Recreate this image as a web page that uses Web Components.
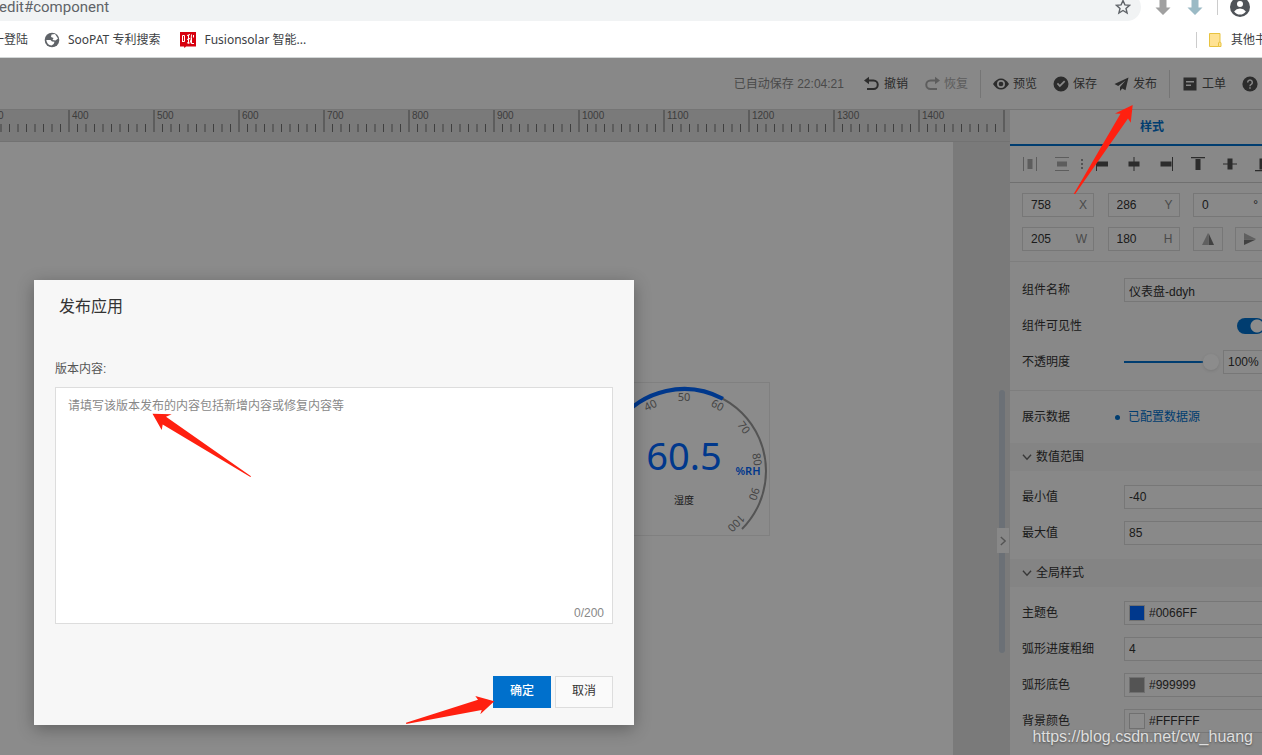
<!DOCTYPE html>
<html lang="zh-CN">
<head>
<meta charset="utf-8">
<title>发布应用</title>
<style>
html, body { margin: 0; height: 100%; }
body { font: 12px/16px "Liberation Sans", "Noto Sans CJK SC", sans-serif; color: #333; overflow: hidden; }
</style>
</head>
<body>
<editor-window></editor-window>
<script>
const define = (name, html, setup) => customElements.define(name, class extends HTMLElement {
  constructor() {
    super();
    const root = this.attachShadow({ mode: 'open' });
    root.innerHTML = '<style>*{box-sizing:border-box}button,input,textarea{font:inherit;color:inherit;margin:0}</style>' + html;
    if (setup) this.setup = setup;
  }
  connectedCallback() { if (this.setup && !this.ready) { this.ready = true; this.setup(this.shadowRoot); } }
});

const ICONS = {
  undo: '<path d="M3 4.500h6.500a4 4 0 0 1 0 8.500H3" fill="none" stroke="currentColor" stroke-width="2"/><path d="M0 4.500 5 .8v7.400z"/>',
  redo: '<path d="M13 4.500H6.500a4 4 0 0 0 0 8.500H13" fill="none" stroke="currentColor" stroke-width="2"/><path d="M16 4.500 11 .8v7.400z"/>',
  eye: '<path fill-rule="evenodd" d="M0 8q3.500-5.500 8-5.500T16 8q-3.500 5.500-8 5.500T0 8zM8 4a4 4 0 1 0 0 8 4 4 0 0 0 0-8z"/><circle cx="8" cy="8" r="2.300"/>',
  check: '<path fill-rule="evenodd" d="M8 .5a7.500 7.500 0 1 1 0 15 7.500 7.500 0 0 1 0-15zM3.800 8l3 3.200 5.500-5.400-1.200-1.200-4.300 4.200L5 6.800z"/>',
  plane: '<path d="M15.500 1.500 1.500 8l3.700 2 7.300-5.500L7 11v4l2.200-2.600 3.300 1.800z"/>',
  doc: '<path fill-rule="evenodd" d="M1.500 1.500h13v13h-13zM4 5v1.400h8V5zM4 8.500v1.400h5V8.500z"/>',
  help: '<circle cx="8" cy="8" r="7.600"/><path d="M5.700 6.400a2.300 2.300 0 1 1 3.500 2Q8 9 8 10.200M8 11.200v1.600" fill="none" stroke="#f7f7f7" stroke-width="1.500"/>',
  distH: '<path d="M1 1h1v14H1zM14 1h1v14h-1zM5.500 3h5v10h-5z"/>',
  distV: '<path d="M1 1h14v1H1zM1 14h14v1H1zM3 5.500h10v5H3z"/>',
  left: '<path d="M2 1h1v14H2zM3 5.500h11v5H3z"/>',
  centerH: '<path d="M7.500 1h1v14h-1zM2.500 5.500h11v5h-11z"/>',
  right: '<path d="M14 1h1v14h-1zM2.500 5.500h11v5h-11z"/>',
  top: '<path d="M1 1h14v1.200H1zM5.500 3h5v11h-5z"/>',
  middle: '<path d="M1 7.500h14v1H1zM5.500 2.500h5v11h-5z"/>',
  bottom: '<path d="M1 14h14v1.200H1zM5.500 2.500h5v11h-5z"/>',
  flipH: '<path d="M8 2v12H2z" opacity=".55"/><path d="M8.500 2 14 14H8.500z"/>',
  flipV: '<path d="M2 2v6h12z" opacity=".55"/><path d="M2 14V8.500h12z"/>',
  chevron: '<path d="M1.500 4.500 8 11.500l6.500-7" fill="none" stroke="currentColor" stroke-width="2.200"/>',
  star: '<path d="M8 1.500l1.900 4.400 4.700.4-3.600 3.100 1.100 4.600L8 11.500 3.900 14 5 9.400 1.400 6.300l4.700-.4z" fill="none" stroke="currentColor" stroke-width="1.400"/>',
  globe: '<circle cx="8" cy="8" r="7.300"/><path d="M7.500 2.500 11 2l3 4.500-2.500 2-3-.5L9.500 6 7 5zM2.300 8 6.500 8l1.500 1.500 2.500.3-.8 2.200-2.200 1.500Q3 13 2.300 8z" fill="#fff"/>',
  avatar: '<circle cx="8" cy="8" r="8"/><circle cx="8" cy="5.600" r="2.400" fill="#fff"/><path d="M3.300 11.500Q5 9.200 8 9.200t4.700 2.300Q11 14 8 14t-4.700-2.500z" fill="#fff"/>',
  folder: '<path d="M2.500 1.500h10.500v9l-1.500 4H2.500z" fill="#ffe293" stroke="#e8c340"/><path d="M11.500 14.500v-3.500q0-.8 1.200-.8t1.300.8v3.500z" fill="#ffe293" stroke="#e8c340"/>',
  brand: '<path d="M0 0h16v14.500H6L4.500 16 4 14.500H0z" fill="#d7000f"/><path d="M2.500 3.500v6.500M2.500 3.500h2v6h-2M7 3.500l3-1M8.500 3v8.500L7 10.500M7 7.500l3-1M11.500 2.500Q11.500 8 9.800 11.500M11.500 6v5.500h2.500M13.500 3v2.500" fill="none" stroke="#fff"/>',
  down: '<path d="M4.500 0h7v8.500h4L8 16 .5 8.500h4z"/>'
};
define('ui-icon', `<style>:host{display:block;flex:none;width:16px;height:16px}svg{display:block;width:100%;height:100%}</style><svg viewBox="0 0 16 16" fill="currentColor" aria-hidden="true"></svg>`,
  function (r) { r.querySelector('svg').innerHTML = ICONS[this.getAttribute('name')]; });

define('browser-chrome', `<style>
:host{display:block;flex:none;background:#fff;border-bottom:1px solid #d3d7d7;font-family:"Noto Sans","Noto Sans CJK SC",sans-serif;color:#3c4043}
.clip{height:21px;overflow:hidden}
.address{display:flex;align-items:center;height:28px;margin-top:-7px;color:#5f6368}
.pill{flex:1;display:flex;align-items:center;justify-content:space-between;height:28px;padding-right:10px;background:#f1f3f4;border-radius:0 14px 14px 0}
.url{font:15px/14px Roboto,sans-serif;margin-left:-1px}
.tools{display:flex;align-items:center;gap:16px;padding:0 12px 0 14px}
.tools i{width:1px;height:16px;margin-left:-2px;margin-right:-4px;background:#ccc}
.g{color:#a0a0a0}.b{color:#9bbac5}.av{width:20px;height:20px;color:#4f5358}
nav{display:flex;align-items:center;height:36px;padding-top:1px;overflow:hidden;white-space:nowrap}
a{display:flex;align-items:center;gap:8px;color:inherit;text-decoration:none;margin-right:20px}
.first{margin:0 16px 0 -8px}
.globe{color:#5f6368}
.rule{width:1px;height:16px;background:#ccc;margin-left:auto}
.other{margin:0 -5px 0 0;padding-left:10px}
</style>
<div class="clip"><div class="address"><div class="pill"><span class="url">edit#component</span><ui-icon name="star"></ui-icon></div>
<div class="tools"><ui-icon class="g" name="down"></ui-icon><ui-icon class="b" name="down"></ui-icon><i></i><ui-icon class="av" name="avatar"></ui-icon></div></div></div>
<nav><a class="first" href="#">一登陆</a><a href="#"><ui-icon class="globe" name="globe"></ui-icon>SooPAT 专利搜索</a><a href="#"><ui-icon name="brand"></ui-icon>Fusionsolar 智能...</a><span class="rule"></span><a class="other" href="#"><ui-icon name="folder"></ui-icon>其他书</a></nav>`);

define('tool-button', `<style>:host{display:block;flex:none}button{display:flex;align-items:center;gap:4px;border:0;background:none;padding:0}:host([off]) button{color:#aaa}</style>
<button><ui-icon></ui-icon><slot></slot></button>`, function (r) {
  r.querySelector('ui-icon').replaceWith(Object.assign(document.createElement('template'), { innerHTML: `<ui-icon name="${this.getAttribute('icon')}"></ui-icon>` }).content);
  if (this.hasAttribute('off')) r.querySelector('button').disabled = true;
});

define('app-toolbar', `<style>
:host{display:flex;flex:none;align-items:center;justify-content:flex-end;gap:16px;height:52px;padding-right:4px;background:#f7f7f7;border-bottom:1px solid #d5d5d5;white-space:nowrap;color:#505050}
.saved{color:#888;margin-right:4px}
i{width:1px;height:28px;background:#d5d5d5;margin:0 -4px}
</style><span class="saved">已自动保存 22:04:21</span>
<tool-button icon="undo">撤销</tool-button><tool-button icon="redo" off>恢复</tool-button><i></i>
<tool-button icon="eye">预览</tool-button><tool-button icon="check">保存</tool-button><tool-button icon="plane">发布</tool-button><i></i>
<tool-button icon="doc">工单</tool-button><tool-button icon="help"></tool-button>`);

define('canvas-ruler', `<style>:host{display:block;flex:none;height:32px;overflow:hidden;background:#dedede;border-bottom:1px solid #d0d0d0}
svg{display:block;width:100%;height:31px}text{font:10px "Liberation Sans",sans-serif;fill:#707070}</style><svg></svg>`, function (r) {
  const svg = r.querySelector('svg'), step = 8.5, origin = 69 - 400 / 10 * step;
  const draw = () => {
    const width = this.clientWidth;
    let out = '';
    for (let n = 30; origin + n * step < width; n++) {
      const x = origin + n * step, major = n % 10 === 0;
      out += `<line x1="${x}" x2="${x}" y1="${major ? 0 : 14}" y2="22" stroke="#747474"/>`;
      if (major && x + 10 < width) out += `<text x="${x + 3}" y="9">${n * 10}</text>`;
    }
    svg.innerHTML = out;
  };
  new ResizeObserver(draw).observe(this);
});

define('gauge-widget', `<style>:host{display:block;width:174px;height:154px;border:1px solid #e9e9e9}svg{display:block;width:172px;height:152px}
text{text-anchor:middle;font-family:"Noto Sans","Noto Sans CJK SC",sans-serif}.tick{font-size:11px;fill:#7c7c7c}</style>
<svg viewBox="597 383 172 152"><g fill="none"></g><g class="ticks"></g>
<text x="684" y="470" font-size="38" fill="#06f">60.5</text><text x="748" y="475" font-size="11" font-weight="600" fill="#06f">%RH</text><text x="684" y="504" font-size="10" fill="#333">湿度</text></svg>`, function (r) {
  const cx = 684, cy = 471, R = 82;
  const at = v => { const a = (v - 50) * 2.7 * Math.PI / 180; return (cx + R * Math.sin(a)) + ' ' + (cy - R * Math.cos(a)); };
  r.querySelector('g').innerHTML = `<path d="M${at(0)}A${R} ${R} 0 1 1 ${at(100)}" stroke="#999" stroke-width="2"/><path d="M${at(0)}A${R} ${R} 0 0 1 ${at(60.5)}" stroke="#06f" stroke-width="4"/>`;
  let t = '';
  for (let v = 30; v <= 100; v += 10) t += `<text class="tick" x="${cx}" y="401" transform="rotate(${(v - 50) * 2.7} ${cx} ${cy})">${v}</text>`;
  r.querySelector('.ticks').innerHTML = t;
});

define('design-canvas', `<style>
:host{display:flex;flex-direction:column;flex:1;min-width:0;background:#dfdfdf;position:relative}
.page{flex:1;margin-right:57px;background:#fdfdfd;position:relative;overflow:hidden}
gauge-widget{position:absolute;left:596px;top:240px}
.bar{position:absolute;right:5px;top:280px;width:6px;height:263px;border-radius:3px;background:#c3cdd8}
button{position:absolute;right:1px;top:418px;width:12px;height:25px;padding:0 1px;border:0;background:#f7f7f7;color:#999}
ui-icon{width:10px;height:10px;transform:rotate(-90deg)}
</style><canvas-ruler></canvas-ruler><div class="page"><gauge-widget></gauge-widget></div><div class="bar"></div><button aria-label="收起"><ui-icon name="chevron"></ui-icon></button>`);

define('prop-row', `<style>:host{display:flex;align-items:center;height:24px}.label{flex:none;width:102px}.control{flex:1;display:flex;align-items:center;min-width:0;gap:4px}:host([end]) .control{justify-content:flex-end}</style>
<div class="label"><slot name="label"></slot></div><div class="control"><slot></slot></div>`);
define('prop-group', `<style>:host{display:block}h3{display:flex;align-items:center;gap:4px;height:28px;margin:0;padding-left:12px;background:#f0f0f0;font:inherit}ui-icon{width:10px;height:10px;color:#666}
.rows{display:flex;flex-direction:column;gap:12px;padding:14px 29px 14px 12px}</style><h3><ui-icon name="chevron"></ui-icon><slot name="title"></slot></h3><div class="rows"><slot></slot></div>`);

define('style-panel', `<style>
:host{display:block;flex:none;width:252px;overflow:hidden;background:#f7f7f7}
.inner{width:284px}
.tab{display:block;width:100%;height:36px;border:0;border-bottom:2px solid #0070cc;background:none;color:#0070cc;font-weight:bold;padding:0}
.align{display:flex;align-items:center;gap:16px;height:37px;padding:0 12px;border-bottom:1px solid #ccc}
.align button,.flip{border:0;padding:0;background:none;color:#505050}
.align button:disabled{color:#aaa}
.dots{flex:none;display:grid;gap:2px;width:4px;margin:0 -6px;justify-items:center}
.dots i{width:2px;height:2px;background:#999}
.geo{display:flex;flex-direction:column;gap:10px;padding:10px 29px 10px 12px;border-bottom:1px solid #e6e6e6}
.line{display:flex;justify-content:space-between}
.unit{display:flex;align-items:center;width:72px;height:24px;border:1px solid #d9d9d9;padding:0 6px 0 8px;background:#f9f9f9}
.unit input{flex:1;min-width:0;width:0;border:0;padding:0;background:none}
.unit span{color:#888}
.unit .deg{color:#333}
.pair{display:flex;justify-content:space-between;width:72px}
.flip{display:grid;place-items:center;width:30px;height:24px;border:1px solid #d9d9d9;color:#777}
.box{flex:1;min-width:0;width:0;height:24px;border:1px solid #d9d9d9;padding:0 4px;background:#f9f9f9}
.basic{display:flex;flex-direction:column;gap:12px;padding:16px 29px 16px 12px;border-bottom:1px solid #e6e6e6}
.data{padding:14px 29px 14px 12px}
.switch{appearance:none;width:28px;height:16px;border-radius:8px;background:radial-gradient(circle at 20px 8px,#fff 6px,#0070cc 7px)}
input[type=range]{appearance:none;flex:none;width:95px;height:16px;background:linear-gradient(#0070cc,#0070cc) 0 7px/88px 2px no-repeat}
input[type=range]::-webkit-slider-thumb{appearance:none;width:16px;height:16px;border-radius:8px;background:#fff;box-shadow:0 1px 3px #ddd}
.data a{display:flex;align-items:center;gap:8px;margin-left:-9px;color:#0070cc;text-decoration:none}
.data a::before{content:"";width:5px;height:5px;border-radius:3px;background:currentColor}
.color{flex:1;display:flex;align-items:center;gap:4px;min-width:0;height:24px;border:1px solid #d9d9d9;padding:0 4px;background:#f9f9f9}
.color input{flex:1;min-width:0;width:0;border:0;padding:0;background:none}
.color i{width:16px;height:16px;border:1px solid #ccc}
</style><div class="inner">
<button class="tab">样式</button>
<div class="align"><button disabled aria-label="水平分布"><ui-icon name="distH"></ui-icon></button><button disabled aria-label="垂直分布"><ui-icon name="distV"></ui-icon></button><div class="dots"><i></i><i></i><i></i></div>
<button aria-label="左对齐"><ui-icon name="left"></ui-icon></button><button aria-label="水平居中"><ui-icon name="centerH"></ui-icon></button><button aria-label="右对齐"><ui-icon name="right"></ui-icon></button><button aria-label="顶对齐"><ui-icon name="top"></ui-icon></button><button aria-label="垂直居中"><ui-icon name="middle"></ui-icon></button><button aria-label="底对齐"><ui-icon name="bottom"></ui-icon></button></div>
<div class="geo"><div class="line"><label class="unit"><input value="758"><span>X</span></label><label class="unit"><input value="286"><span>Y</span></label><label class="unit"><input value="0"><span class="deg">°</span></label></div>
<div class="line"><label class="unit"><input value="205"><span>W</span></label><label class="unit"><input value="180"><span>H</span></label><div class="pair"><button class="flip" aria-label="水平翻转"><ui-icon name="flipH"></ui-icon></button><button class="flip" aria-label="垂直翻转"><ui-icon name="flipV"></ui-icon></button></div></div></div>
<div class="basic"><prop-row><label slot="label" for="name">组件名称</label><input id="name" class="box" value="仪表盘-ddyh"></prop-row>
<prop-row end><label slot="label" for="vis">组件可见性</label><input id="vis" class="switch" type="checkbox" checked></prop-row>
<prop-row><label slot="label" for="op">不透明度</label><input id="op" type="range" value="100"><input class="box" aria-label="不透明度数值" value="100%"></prop-row></div>
<div class="data"><prop-row><span slot="label">展示数据</span><a href="#">已配置数据源</a></prop-row></div>
<prop-group><span slot="title">数值范围</span><prop-row><label slot="label" for="min">最小值</label><input id="min" class="box" value="-40"></prop-row><prop-row><label slot="label" for="max">最大值</label><input id="max" class="box" value="85"></prop-row></prop-group>
<prop-group><span slot="title">全局样式</span><prop-row><label slot="label" for="c1">主题色</label><div class="color"><i style="background:#06f"></i><input id="c1" value="#0066FF"></div></prop-row>
<prop-row><label slot="label" for="arc">弧形进度粗细</label><input id="arc" class="box" value="4"></prop-row>
<prop-row><label slot="label" for="c2">弧形底色</label><div class="color"><i style="background:#999"></i><input id="c2" value="#999999"></div></prop-row>
<prop-row><label slot="label" for="c3">背景颜色</label><div class="color"><i style="background:#fff"></i><input id="c3" value="#FFFFFF"></div></prop-row></prop-group></div>`);

define('publish-dialog', `<style>
:host{display:flex;flex-direction:column;width:600px;padding:16px 21px 17px;background:#f7f7f7;box-shadow:0 4px 16px rgba(0,0,0,.3)}
h2{margin:0 0 43px 4px;font:16px/22px "Liberation Sans","Noto Sans CJK SC",sans-serif;color:#333}
label{color:#555;line-height:16px;margin-bottom:10px}
.area{display:flex;flex-direction:column;height:237px;background:#fff;border:1px solid #ddd}
textarea{flex:1;border:0;resize:none;outline:0;padding:10px 12px;background:none;line-height:16px}
textarea::placeholder{color:#888}
.count{align-self:flex-end;padding:0 8px 2px;color:#888}
footer{display:flex;justify-content:flex-end;gap:4px;margin-top:52px}
button{width:58px;height:32px;border:1px solid #ddd;background:#fafafa;padding:0 0 2px}
.ok{background:#0070cc;border-color:#0070cc;color:#fff;font-weight:500}
</style><h2>发布应用</h2><label for="note">版本内容:</label>
<div class="area"><textarea id="note" maxlength="200" placeholder="请填写该版本发布的内容包括新增内容或修复内容等"></textarea><span class="count">0/200</span></div>
<footer><button class="ok">确定</button><button>取消</button></footer>`);

define('callout-arrows', `<style>:host{display:block;pointer-events:none}svg{display:block;width:100%;height:100%}</style>
<svg fill="#ff2010" aria-hidden="true"><path d="M1132.700 105 1115 113.500l5.500.3L1073.700 194h1.500L1128 118.500l2.700 4.200z"/><path d="M152.500 413.700l19.200.6-5.700 2.500 85 59.500-.6.7-87.700-52.600-1 5.600z"/><path d="M494.300 701.300 475.300 696l2.700 3.800-72 22.900.3 1.300L481.700 710l-1.400 4.300z"/></svg>`);

define('editor-window', `<style>
:host{display:flex;flex-direction:column;height:100vh;position:relative;overflow:hidden}
.app{flex:1;display:flex;flex-direction:column;min-height:0;position:relative}
main{flex:1;display:flex;min-height:0}
.mask{position:absolute;inset:0;background:rgba(0,0,0,.45)}
publish-dialog{position:absolute;left:34px;top:280px}
callout-arrows{position:absolute;inset:0}
.mark{position:absolute;right:9px;bottom:8px;font-size:16px;line-height:20px;color:#dedede;text-shadow:0 1px 2px rgba(60,60,60,.7)}
</style><browser-chrome></browser-chrome>
<div class="app"><app-toolbar></app-toolbar><main><design-canvas></design-canvas><style-panel></style-panel></main><div class="mask"></div></div>
<publish-dialog role="dialog" aria-label="发布应用"></publish-dialog><callout-arrows></callout-arrows><span class="mark">https://blog.csdn.net/cw_huang</span>`);
</script>
</body>
</html>
